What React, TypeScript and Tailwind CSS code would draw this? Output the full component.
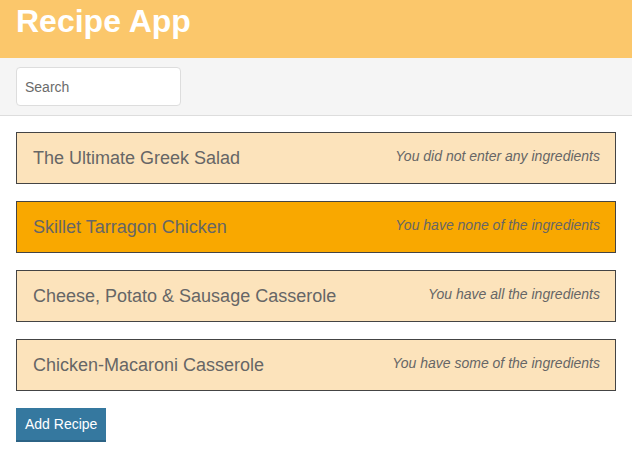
const recipes = [
    { name: 'The Ultimate Greek Salad', status: 'You did not enter any ingredients', active: false },
    { name: 'Skillet Tarragon Chicken', status: 'You have none of the ingredients', active: true },
    { name: 'Cheese, Potato & Sausage Casserole', status: 'You have all the ingredients', active: false },
    { name: 'Chicken-Macaroni Casserole', status: 'You have some of the ingredients', active: false },
];

export default function App() {
    return (
        <div className="min-h-screen bg-white font-['Liberation_Sans',Arial,sans-serif]">
            {/* Header */}
            <header className="h-[58px] bg-[#fbc76b] px-4">
                <h1 className="text-[32px] font-bold text-white leading-[42px]">Recipe App</h1>
            </header>

            {/* Search */}
            <div className="h-[58px] bg-[#f5f5f5] border-b border-[#dddddd] px-4 pt-[9px]">
                <input
                    type="text"
                    placeholder="Search"
                    className="w-[165px] h-[39px] bg-white border border-[#dddddd] rounded-[4px] px-2 text-[14px] text-[#555] placeholder:text-[#6b6b6b] outline-none"
                />
            </div>

            {/* Recipe list */}
            <div className="px-4 pt-[16px] flex flex-col gap-[17px]">
                {recipes.map((r) => (
                    <div
                        key={r.name}
                        className={`h-[52px] border border-[#444444] flex items-start justify-between pl-4 pr-[15px] ${r.active ? 'bg-[#f9a800]' : 'bg-[#fce3bb]'}`}
                    >
                        <span className="text-[18px] text-[#666666] leading-[20px] mt-[15px]">{r.name}</span>
                        <span className="text-[14px] italic text-[#666666] leading-[16px] mt-[15px]">{r.status}</span>
                    </div>
                ))}
            </div>

            <div className="px-4 pt-[17px]">
                <button className="h-[34px] px-[9px] bg-[#35789f] border-b-2 border-[#2c6385] text-white text-[14px]">
                    Add Recipe
                </button>
            </div>
        </div>
    );
}
